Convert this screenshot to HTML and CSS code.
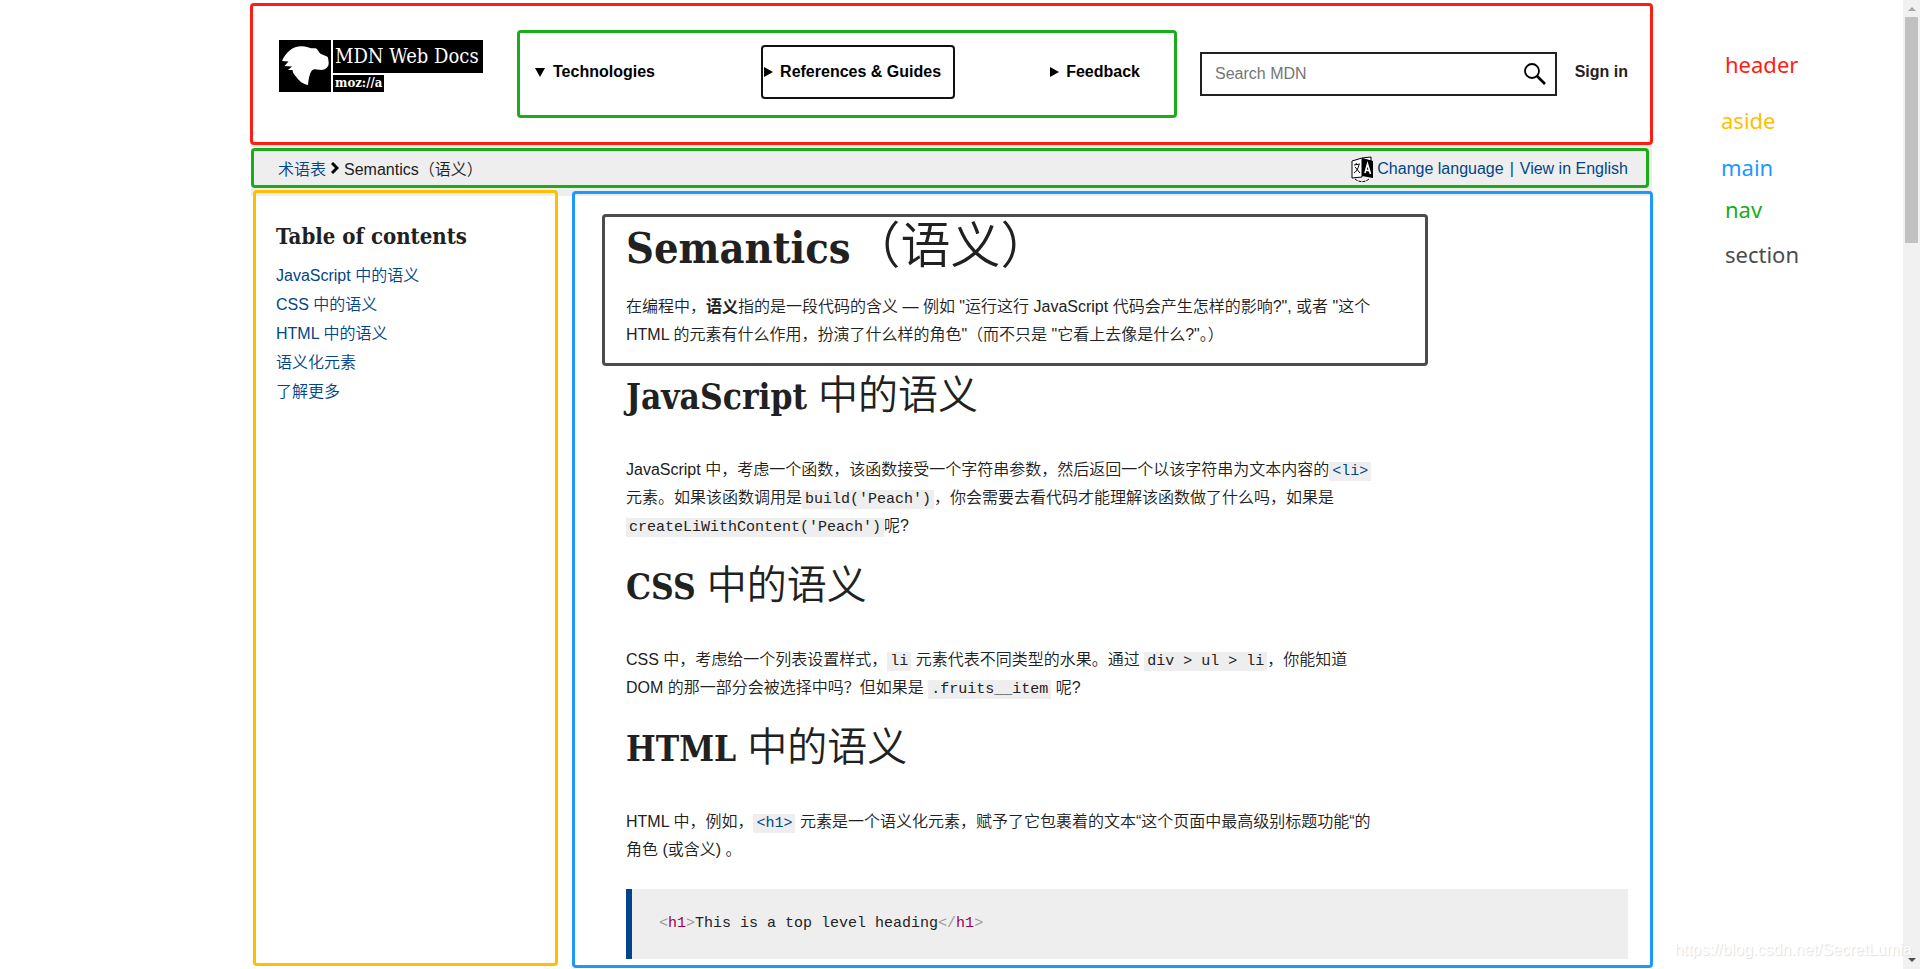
FILE: index.html
```html
<!DOCTYPE html>
<html lang="zh-CN">
<head>
  <meta charset="UTF-8">
  <meta name="viewport" content="width=device-width, initial-scale=1.0">
  <title>Semantics（语义） - MDN Web Docs</title>
  <link rel="stylesheet" href="styles.css">
</head>
<body>

  <div class="layout">
    <div class="page">

      <header class="page-header">
        <a href="#" class="logo">
          <svg class="logo-dog" viewBox="0 0 52 52" aria-hidden="true">
            <rect width="52" height="52" fill="#000"/>
            <path fill="#fff" d="M3 21C7 12 14 6 23 6.300C27 6.300 29 7.500 32 8.200C34 8.600 36 7.700 37.500 8.700C39.500 10 39.500 12.500 42 14L48 16.500C49.500 17.500 49 19 49.500 21C50 24 49.500 26 48 27.500C45.500 30 43 30 40 29.800C37 29 34 28.500 32.500 31C30.500 34 29.500 39 29 45C23 43.500 20.500 41 18.500 38.500C17 36 14 34.500 13.500 30L9 30L13 26.500L5.500 26L9.500 21.500Z"/>
          </svg>
          <span class="logo-text">
            <span class="logo-name">MDN Web Docs</span>
            <span class="logo-moz">moz://a</span>
          </span>
        </a>

        <nav class="main-nav">
          <button type="button" class="nav-item"><span class="arrow arrow-down"></span>Technologies</button>
          <button type="button" class="nav-item active"><span class="arrow"></span>References &amp; Guides</button>
          <button type="button" class="nav-item"><span class="arrow"></span>Feedback</button>
        </nav>

        <form class="search">
          <input type="search" placeholder="Search MDN" aria-label="Search MDN">
          <button type="button" aria-label="Search">
            <svg viewBox="0 0 22 22" fill="none" stroke="#000"><circle cx="8" cy="8" r="7" stroke-width="1.800"/><path d="M13 13L21 21" stroke-width="2.600"/></svg>
          </button>
        </form>

        <a href="#" class="sign-in">Sign in</a>
      </header>

      <div class="breadcrumb-bar">
        <nav class="breadcrumbs">
          <div class="crumbs">
            <a href="#">术语表</a>
            <svg viewBox="0 0 8 12" fill="none" stroke="#000" stroke-width="3"><path d="M1 1L6 6L1 11"/></svg>
            <span>Semantics（语义）</span>
          </div>
          <div class="languages">
            <svg viewBox="0 0 22 26">
              <path d="M1 5L11 2L20 1V5L11 3V21L1 22Z" fill="#fff" stroke="#000"/>
              <path d="M11 2L22 5V22L11 20Z" fill="#000"/>
              <path d="M14 17L16.500 8L19.500 18M15 14L18.500 15" fill="none" stroke="#fff" stroke-width="1.600"/>
              <path d="M3 9L9 8M5 7L6 9M8 9C7 13 5 16 3 17M4 11L9 17" fill="none" stroke="#000"/>
              <path d="M4 23C8 26.500 14 26.500 18 23" fill="none" stroke="#000" stroke-dasharray="3 1"/>
            </svg>
            <a href="#">Change language</a>
            <span class="divider">|</span>
            <a href="#">View in English</a>
          </div>
        </nav>
      </div>

      <div class="columns">
        <aside class="toc">
          <h2>Table of contents</h2>
          <ul>
            <li><a href="#js">JavaScript 中的语义</a></li>
            <li><a href="#css">CSS 中的语义</a></li>
            <li><a href="#html">HTML 中的语义</a></li>
            <li><a href="#elements">语义化元素</a></li>
            <li><a href="#more">了解更多</a></li>
          </ul>
        </aside>

        <main class="content">
          <section class="intro">
            <h1>Semantics<span class="cjk">（语义）</span></h1>
            <p>在编程中，<strong>语义</strong>指的是一段代码的含义 — 例如 "运行这行 JavaScript 代码会产生怎样的影响?", 或者 "这个<br>HTML 的元素有什么作用，扮演了什么样的角色"（而不只是 "它看上去像是什么?"。）</p>
          </section>

          <div class="article">
            <h2 id="js">JavaScript <span class="cjk">中的语义</span></h2>
            <p>JavaScript 中，考虑一个函数，该函数接受一个字符串参数，然后返回一个以该字符串为文本内容的<a href="#"><code>&lt;li&gt;</code></a><br>元素。如果该函数调用是<code>build('Peach')</code>，你会需要去看代码才能理解该函数做了什么吗，如果是<br><code>createLiWithContent('Peach')</code>呢?</p>

            <h2 id="css">CSS <span class="cjk">中的语义</span></h2>
            <p>CSS 中，考虑给一个列表设置样式，<code>li</code> 元素代表不同类型的水果。通过 <code>div &gt; ul &gt; li</code>，你能知道<br>DOM 的那一部分会被选择中吗？但如果是 <code>.fruits__item</code> 呢?</p>

            <h2 id="html">HTML <span class="cjk">中的语义</span></h2>
            <p>HTML 中，例如，<a href="#"><code>&lt;h1&gt;</code></a> 元素是一个语义化元素，赋予了它包裹着的文本“这个页面中最高级别标题功能“的<br>角色 (或含义) 。</p>

            <pre><span class="punct">&lt;</span><span class="tag">h1</span><span class="punct">&gt;</span>This is a top level heading<span class="punct">&lt;/</span><span class="tag">h1</span><span class="punct">&gt;</span></pre>
          </div>
        </main>
      </div>
    </div>

    <ul class="legend">
      <li class="red indent">header</li>
      <li class="yellow">aside</li>
      <li class="blue">main</li>
      <li class="green indent">nav</li>
      <li class="gray indent">section</li>
    </ul>

    <div class="scrollbar">
      <span class="scroll-up"></span>
      <span class="thumb"></span>
      <span class="scroll-down"></span>
    </div>
  </div>

  <div class="watermark">https://blog.csdn.net/SecretLumia</div>

</body>
</html>
```
FILE: styles.css
```css
* {
  box-sizing: border-box;
}

body {
  margin: 0;
  font-family: "Liberation Sans", "Noto Sans CJK SC", sans-serif;
  font-size: 16px;
  font-weight: 350;
  color: #212121;
  background: #fff;
  overflow: hidden;
}

a {
  color: #00458b;
  text-decoration: none;
}

ul {
  list-style: none;
  margin: 0;
  padding: 0;
}

svg {
  display: block;
}

.layout {
  display: grid;
  grid-template-columns: 1fr minmax(0, 1403px) 1fr 17px;
  grid-template-rows: 100vh;
}

.page {
  grid-column: 2;
  display: flex;
  flex-direction: column;
  padding: 3px 0 1px;
  min-height: 0;
}

/* header */
.page-header {
  display: flex;
  align-items: flex-start;
  height: 142px;
  padding: 0 22px 0 26px;
  border: 3px solid #ff1c10;
  border-radius: 4px;
  flex: none;
}

.logo {
  display: flex;
  gap: 2px;
  width: 204px;
  margin-top: 34px;
  color: #fff;
  font-family: "DejaVu Serif Condensed", "DejaVu Serif", serif;
}

.logo-dog {
  width: 52px;
  height: 52px;
}

.logo-text {
  display: flex;
  flex-direction: column;
  align-items: flex-start;
  gap: 2px;
  flex: 1;
  white-space: nowrap;
}

.logo-name {
  width: 100%;
  height: 33px;
  padding-left: 2px;
  line-height: 32px;
  font-size: 20px;
  background: #000;
}

.logo-moz {
  height: 17px;
  padding: 0 2px;
  line-height: 16px;
  font-size: 13px;
  font-weight: bold;
  background: #000;
}

.main-nav {
  display: flex;
  justify-content: space-between;
  width: 660px;
  height: 88px;
  margin: 24px 23px 0 34px;
  padding: 12px 20px 0 12px;
  border: 3px solid #1aad19;
  border-radius: 4px;
}

.nav-item {
  display: flex;
  align-items: center;
  height: 54px;
  padding: 0 12px 0 1px;
  border: 2px solid transparent;
  border-radius: 4px;
  background: none;
  font-family: inherit;
  font-size: 16px;
  font-weight: bold;
  color: #000;
}

.nav-item.active {
  border-color: #111;
}

.arrow {
  width: 9px;
  margin-right: 7px;
  border-left: 9px solid #000;
  border-top: 5px solid transparent;
  border-bottom: 5px solid transparent;
}

.arrow-down {
  width: 10px;
  margin-right: 8px;
  border-top: 9px solid #000;
  border-left: 5px solid transparent;
  border-right: 5px solid transparent;
  border-bottom: 0;
}

.search {
  display: flex;
  align-items: center;
  flex: 1;
  height: 44px;
  margin-top: 46px;
  padding: 0 9px 0 13px;
  border: 2px solid #212121;
}

.search input {
  flex: 1;
  min-width: 0;
  padding: 0;
  border: 0;
  outline: 0;
  background: none;
  font-family: inherit;
  font-size: 16px;
}

.search input::placeholder {
  color: #757575;
}

.search button {
  padding: 0;
  border: 0;
  background: none;
}

.search svg {
  width: 22px;
  height: 22px;
}

.sign-in {
  margin: 54px 0 0 18px;
  line-height: 24px;
  font-weight: bold;
  color: #212121;
}

/* breadcrumbs */
.breadcrumb-bar {
  height: 51px;
  margin: 0 1px;
  padding: 3px 3px 8px 0;
  background: #eee;
  flex: none;
}

.breadcrumbs {
  display: flex;
  justify-content: space-between;
  align-items: center;
  height: 40px;
  padding: 0 18px 0 24px;
  border: 3px solid #1aad19;
  border-radius: 4px;
}

.crumbs,
.languages {
  display: flex;
  align-items: center;
}

.crumbs svg {
  width: 8px;
  height: 12px;
  margin: 0 5px;
}

.languages {
  padding-top: 2px;
  color: #00458b;
}

.languages svg {
  width: 22px;
  height: 26px;
  margin-right: 4px;
}

.divider {
  margin: 0 6px;
}

/* columns */
.columns {
  display: flex;
  gap: 14px;
  flex: 1;
  min-height: 0;
  margin-top: -6px;
  padding-left: 3px;
}

.toc {
  width: 305px;
  margin-bottom: 2px;
  padding: 27px 20px;
  border: 3px solid #ffbe00;
  border-radius: 4px;
  flex: none;
}

.toc h2 {
  margin: 0 0 9px;
  font-family: "DejaVu Serif Condensed", "DejaVu Serif", serif;
  font-size: 22px;
  line-height: 32px;
}

.toc li {
  line-height: 29px;
}

.content {
  flex: 1;
  min-width: 0;
  margin-top: 1px;
  padding: 20px 22px 0 27px;
  border: 3px solid #1e98ff;
  border-radius: 4px;
  overflow: hidden;
}

.intro {
  max-width: 826px;
  padding: 0 21px 14px;
  border: 3px solid #4c4c4c;
  border-radius: 4px;
}

.article {
  padding: 8px 0 0 24px;
}

h1,
.article h2 {
  font-family: "DejaVu Serif Condensed", "DejaVu Serif", serif;
  font-weight: bold;
}

h1 {
  margin: 0 0 14px;
  font-size: 43px;
  line-height: 62px;
}

.article h2 {
  margin: 24px 0 36px;
  font-size: 35px;
  line-height: 46px;
}

.article h2:first-child {
  margin-top: 0;
}

.cjk {
  font-family: "Noto Sans CJK SC", sans-serif;
  font-size: 40px;
  font-weight: 350;
  line-height: 0;
}

h1 .cjk {
  font-size: 50px;
}

p {
  margin: 0;
  line-height: 28px;
  white-space: nowrap;
}

code,
pre {
  font-family: "Liberation Mono", monospace;
  font-size: 15px;
}

code {
  padding: 1px 3px;
  background: #eee;
  line-height: 1;
}

pre {
  margin: 25px 0 0;
  padding: 21px 27px;
  border-left: 6px solid #00458b;
  background: #eee;
  line-height: 28px;
}

.punct {
  color: #999;
}

.tag {
  color: #905;
}

/* legend */
.legend {
  display: grid;
  grid-template-rows: 56px 47px 42px 45px;
  align-content: start;
  padding: 49px 0 0 68px;
  font-family: "Noto Sans", sans-serif;
  font-size: 22px;
  font-weight: normal;
  line-height: 30px;
}

.indent {
  padding-left: 4px;
}

.red { color: #ff1c10; }
.yellow { color: #ffbe00; }
.blue { color: #1e98ff; }
.green { color: #1aad19; }
.gray { color: #4c4c4c; }

/* scrollbar */
.scrollbar {
  display: flex;
  flex-direction: column;
  align-items: center;
  padding: 7px 0;
  background: #f1f1f1;
}

.scroll-up,
.scroll-down {
  border-left: 4px solid transparent;
  border-right: 4px solid transparent;
}

.scroll-up {
  border-bottom: 4px solid #a3a3a3;
}

.scroll-down {
  margin-top: auto;
  border-top: 4px solid #505050;
}

.thumb {
  width: 13px;
  height: 226px;
  margin-top: 6px;
  background: #c1c1c1;
}

.watermark {
  position: absolute;
  right: 8px;
  bottom: 10px;
  color: #fff;
  text-shadow: 1px 1px 1px #ddd;
}
```
